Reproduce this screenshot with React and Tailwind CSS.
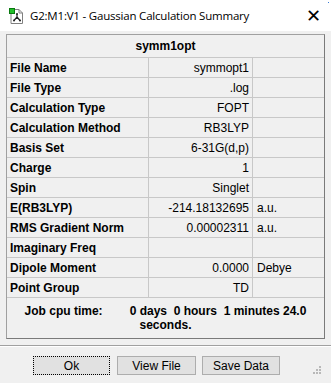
import React from "react";

const rows = [
  ["File Name", "symmopt1", ""],
  ["File Type", ".log", ""],
  ["Calculation Type", "FOPT", ""],
  ["Calculation Method", "RB3LYP", ""],
  ["Basis Set", "6-31G(d,p)", ""],
  ["Charge", "1", ""],
  ["Spin", "Singlet", ""],
  ["E(RB3LYP)", "-214.18132695", "a.u."],
  ["RMS Gradient Norm", "0.00002311", "a.u."],
  ["Imaginary Freq", "", ""],
  ["Dipole Moment", "0.0000", "Debye"],
  ["Point Group", "TD", ""],
];

const AppIcon = () => (
  <svg width="16" height="16" viewBox="0 0 16 16">
    <path d="M2 1.5h8l3.5 3.5v10.5h-11.5z" fill="#fff" stroke="#808080" />
    <path d="M10 1.5v3.5h3.5" fill="none" stroke="#808080" />
    <rect x="0.5" y="0.5" width="5" height="5" fill="#22c02a" stroke="#0a7a10" />
    <path d="M8 6v3M8 9l-3 3.5M8 9l3 3.5" stroke="#222" strokeWidth="1.2" fill="none" />
    <circle cx="8" cy="6" r="1" fill="#222" />
    <circle cx="5" cy="12.5" r="1" fill="#222" />
    <circle cx="11" cy="12.5" r="1" fill="#222" />
  </svg>
);

export default function App() {
  return (
    <div className="w-[331px] h-[383px] bg-[#f0f0f0] flex flex-col text-black text-[12px] font-['Liberation_Sans',Arial,sans-serif] overflow-hidden">
      {/* Title bar */}
      <div className="h-[31px] bg-white flex items-center pl-[9px] relative">
        <AppIcon />
        <span className="ml-[5px] text-[11.5px] text-[#000] font-['Open_Sans',sans-serif] tracking-[-0.2px]">
          G2:M1:V1 - Gaussian Calculation Summary
        </span>
        <span className="ml-auto mr-[10px] text-[18px] font-light leading-none font-['DejaVu_Sans',sans-serif]">
          ✕
        </span>
        <span className="absolute right-[2px] top-[2px] w-[1px] h-[1px] bg-[#3a7bd5]" />
      </div>

      {/* Summary table */}
      <div className="mx-[6px] mt-[3px] border border-[#a0a0a0] border-r-[#7a7a7a] border-b-[#7a7a7a] flex flex-col">
        <div className="h-[22px] flex items-center justify-center font-bold">
          symm1opt
        </div>
        {rows.map(([label, value, unit]) => (
          <div
            key={label}
            className="h-[20px] grid grid-cols-[142px_104px_1fr] border-t border-[#c8c8c8]"
          >
            <div className="pl-[3px] flex items-center font-bold border-r border-[#c8c8c8]">
              {label}
            </div>
            <div className="pr-[3px] flex items-center justify-end border-r border-[#c8c8c8]">
              {value}
            </div>
            <div className="pl-[4px] flex items-center">{unit}</div>
          </div>
        ))}
        <div className="h-[41px] border-t border-[#c8c8c8] flex flex-col items-center justify-center font-bold leading-[14px]">
          <div className="whitespace-pre">
            Job cpu time:<span className="ml-[27px]">0 days  0 hours  1 minutes 24.0</span>
          </div>
          <div>seconds.</div>
        </div>
      </div>

      {/* Separator */}
      <div className="mt-[6px] border-t border-[#a0a0a0] border-b border-b-white" />

      {/* Buttons */}
      <div className="flex items-start pl-[33px] mt-[9px] gap-[8px] relative">
        <button className="w-[77px] h-[19px] bg-[#e1e1e1] border border-dotted border-black flex items-center justify-center">
          Ok
        </button>
        <button className="w-[79px] h-[19px] bg-[#e1e1e1] border border-[#adadad] flex items-center justify-center -ml-[1px]">
          View File
        </button>
        <button className="w-[78px] h-[19px] bg-[#e1e1e1] border border-[#adadad] flex items-center justify-center -ml-[2px]">
          Save Data
        </button>
        <div className="absolute right-[10px] top-[10px] grid grid-cols-3 gap-[1px]">
          <span />
          <span />
          <span className="w-[2px] h-[2px] bg-[#b8b8b8]" />
          <span />
          <span className="w-[2px] h-[2px] bg-[#b8b8b8]" />
          <span className="w-[2px] h-[2px] bg-[#b8b8b8]" />
          <span className="w-[2px] h-[2px] bg-[#b8b8b8]" />
          <span className="w-[2px] h-[2px] bg-[#b8b8b8]" />
          <span className="w-[2px] h-[2px] bg-[#b8b8b8]" />
        </div>
      </div>
    </div>
  );
}
